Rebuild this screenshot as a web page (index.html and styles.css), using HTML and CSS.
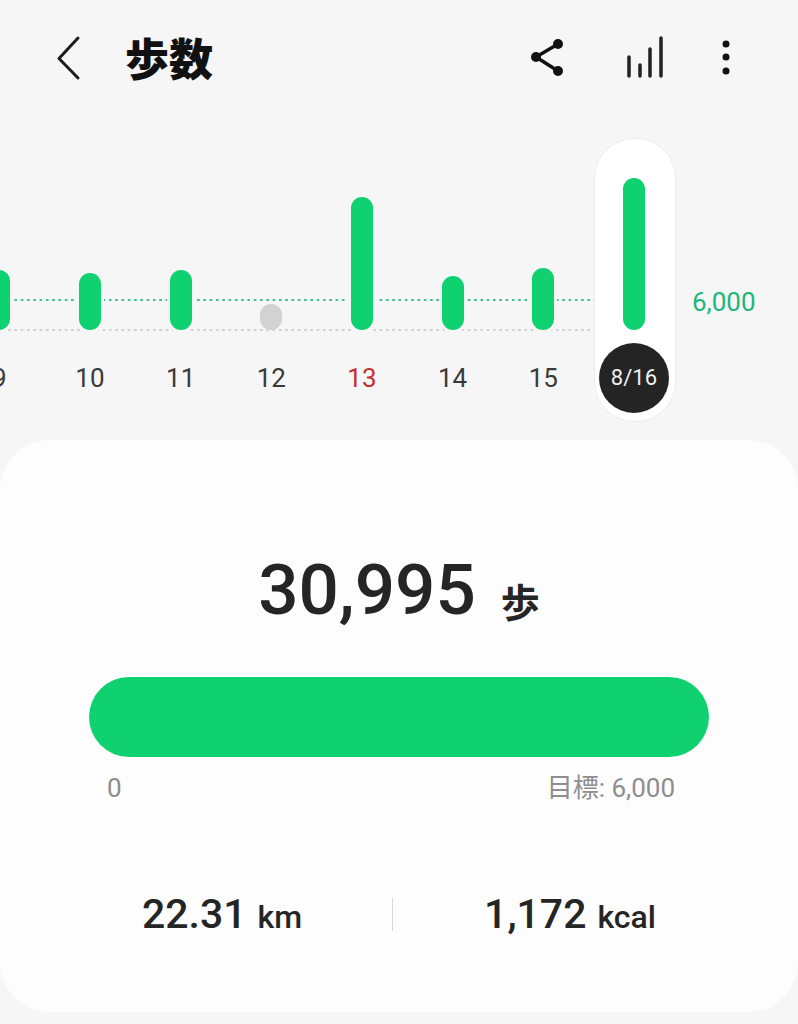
FILE: index.html
```html
<!DOCTYPE html>
<html lang="ja">
<head>
    <meta charset="UTF-8">
    <meta name="viewport" content="width=device-width, initial-scale=1.0">
    <title>歩数</title>
    <link rel="stylesheet" href="styles.css">
</head>
<body>
    <header class="app-bar">
        <svg class="icon" viewBox="0 0 40 60" aria-hidden="true">
            <path d="M28 9 L9 29.500 L28 49" fill="none" stroke="#1c1c1c" stroke-width="3" stroke-linecap="round" stroke-linejoin="round"/>
        </svg>
        <h1 class="title">歩数</h1>
        <div class="actions">
            <svg class="icon" viewBox="0 0 40 60" aria-hidden="true">
                <path d="M30 15 L8 28 L30 42" fill="none" stroke="#111" stroke-width="3.500"/>
                <circle cx="30" cy="15" r="5" fill="#111"/>
                <circle cx="8" cy="28" r="5" fill="#111"/>
                <circle cx="30" cy="42" r="5" fill="#111"/>
            </svg>
            <svg class="icon icon-bars" viewBox="0 0 40 60" aria-hidden="true">
                <path d="M4 28 V47 M15 36 V47 M25 20 V47 M36 9 V47" fill="none" stroke="#222" stroke-width="3.500" stroke-linecap="round"/>
            </svg>
            <svg class="icon icon-more" viewBox="0 0 40 60" aria-hidden="true">
                <circle cx="20" cy="15" r="3.500" fill="#111"/>
                <circle cx="20" cy="28" r="3.500" fill="#111"/>
                <circle cx="20" cy="42" r="3.500" fill="#111"/>
            </svg>
        </div>
    </header>

    <section class="chart">
        <div class="guide guide-goal"></div>
        <div class="guide guide-base"></div>
        <div class="days">
            <div class="day"><div class="bar-slot"><div class="bar" style="height: 60px"></div></div><span class="day-label">9</span></div>
            <div class="day"><div class="bar-slot"><div class="bar" style="height: 57px"></div></div><span class="day-label">10</span></div>
            <div class="day"><div class="bar-slot"><div class="bar" style="height: 60px"></div></div><span class="day-label">11</span></div>
            <div class="day"><div class="bar-slot"><div class="bar bar-missed" style="height: 26px"></div></div><span class="day-label">12</span></div>
            <div class="day"><div class="bar-slot"><div class="bar" style="height: 133px"></div></div><span class="day-label sunday">13</span></div>
            <div class="day"><div class="bar-slot"><div class="bar" style="height: 54px"></div></div><span class="day-label">14</span></div>
            <div class="day"><div class="bar-slot"><div class="bar" style="height: 62px"></div></div><span class="day-label">15</span></div>
            <div class="day selected"><div class="bar-slot"><div class="bar" style="height: 152px"></div></div><span class="day-label">8/16</span></div>
        </div>
        <span class="goal-value">6,000</span>
    </section>

    <main class="card">
        <div class="total">
            <span class="total-value">30,995</span>
            <span class="total-unit">歩</span>
        </div>
        <div class="progress"></div>
        <div class="progress-labels">
            <span>0</span>
            <span>目標: 6,000</span>
        </div>
        <div class="stats">
            <div class="stat stat-distance"><span class="stat-value">22.31</span> <span class="stat-unit">km</span></div>
            <div class="stat"><span class="stat-value">1,172</span> <span class="stat-unit">kcal</span></div>
        </div>
    </main>
</body>
</html>
```

FILE: styles.css
```css
:root {
    --bg: #f6f6f6;
    --card: #fdfdfd;
    --green: #0fd170;
    --text: #252525;
    --muted: #8e8e8e;
}

* {
    margin: 0;
    padding: 0;
    box-sizing: border-box;
    font-family: Roboto, "Noto Sans CJK JP", sans-serif;
}

body {
    width: 798px;
    height: 1024px;
    overflow: hidden;
    background-color: var(--bg);
    color: var(--text);
}

.app-bar {
    height: 118px;
    display: flex;
    align-items: flex-start;
    padding: 29px 52px 0 50px;
}

.icon {
    width: 40px;
    height: 60px;
    flex-shrink: 0;
}

.title {
    margin-left: 35px;
    margin-top: -2px;
    font-family: "Noto Sans CJK JP", sans-serif;
    font-size: 44px;
    line-height: 60px;
    font-weight: 900;
    color: #111;
}

.actions {
    margin-left: auto;
    display: flex;
}

.icon-bars {
    margin-left: 57px;
}

.icon-more {
    margin-left: 41px;
}

.chart {
    position: relative;
    height: 322px;
    overflow: hidden;
}

.guide {
    position: absolute;
    left: 0;
    width: 600px;
    height: 2px;
    background-size: 6.300px 2px;
}

.guide-goal {
    top: 181px;
    background-image: radial-gradient(circle, #35c08c 1px, transparent 1.300px);
}

.guide-base {
    top: 211px;
    background-image: radial-gradient(circle, #cfcfcf 1px, transparent 1.300px);
}

.days {
    position: relative;
    display: flex;
    margin-left: -46px;
    padding-top: 20px;
}

.day {
    position: relative;
    width: 90.670px;
    height: 282px;
    flex-shrink: 0;
    display: flex;
    flex-direction: column;
    align-items: center;
}

.bar-slot {
    height: 192px;
    display: flex;
    align-items: flex-end;
}

.bar {
    width: 22px;
    border-radius: 11px;
    background-color: var(--green);
    box-shadow: 0 0 0 3px var(--bg);
}

.bar-missed {
    background-color: #d2d2d2;
    box-shadow: none;
}

.day-label {
    margin-top: 30px;
    font-size: 26px;
    line-height: 36px;
    color: #3a3a3a;
}

.sunday {
    color: #c62f2f;
}

.selected::before {
    content: "";
    position: absolute;
    top: 0;
    left: 5px;
    width: 80px;
    height: 282px;
    border-radius: 40px;
    background-color: #fff;
    border: 1px solid #ececec;
}

.selected .bar-slot {
    position: relative;
}

.selected .bar {
    box-shadow: none;
}

.selected .day-label {
    position: relative;
    width: 70px;
    height: 70px;
    margin-top: 13px;
    border-radius: 50%;
    background-color: #242424;
    color: #efefef;
    font-size: 22px;
    line-height: 70px;
    text-align: center;
}

.goal-value {
    position: absolute;
    top: 166px;
    left: 692px;
    font-size: 26px;
    line-height: 36px;
    color: #1db67a;
}

.card {
    height: 572px;
    padding-top: 110px;
    border-radius: 50px;
    background-color: var(--card);
}

.total {
    display: flex;
    justify-content: center;
    align-items: flex-start;
    gap: 25px;
    height: 80px;
}

.total-value {
    font-size: 71px;
    line-height: 80px;
    font-weight: 500;
}

.total-unit {
    margin-top: 26px;
    font-family: "Noto Sans CJK JP", sans-serif;
    font-size: 39px;
    line-height: 48px;
    font-weight: 700;
}

.progress {
    height: 80px;
    margin: 47px 89px 0;
    border-radius: 40px;
    background-color: var(--green);
}

.progress-labels {
    display: flex;
    justify-content: space-between;
    padding: 14px 123px 0 107px;
    font-size: 26px;
    line-height: 34px;
    color: var(--muted);
}

.stats {
    display: flex;
    margin: 81px 50px 0 52px;
}

.stat {
    flex: 1;
    text-align: center;
    line-height: 56px;
}

.stat-distance {
    flex: 0 0 340px;
}

.stat + .stat {
    background: linear-gradient(#d9d9d9, #d9d9d9) left 0 top 12px / 1px 33px no-repeat;
}

.stat-value {
    font-size: 41px;
    font-weight: 500;
}

.stat-unit {
    margin-left: 7px;
    font-size: 32px;
    font-weight: 500;
}
```
